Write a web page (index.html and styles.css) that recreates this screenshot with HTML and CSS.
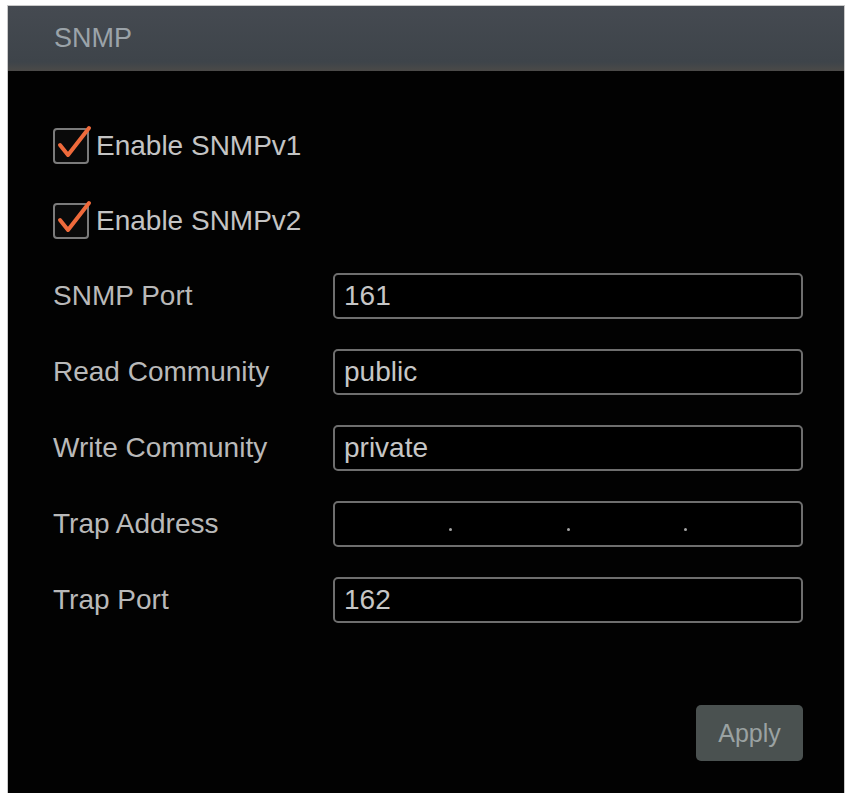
FILE: index.html
```html
<!DOCTYPE html>
<html lang="en">
<head>
  <meta charset="UTF-8">
  <meta name="viewport" content="width=device-width, initial-scale=1.0">
  <title>SNMP</title>
  <link rel="stylesheet" href="styles.css">
</head>
<body>
  <div class="panel">

    <!-- title bar -->
    <header class="panel-header">SNMP</header>

    <div class="panel-body">

      <!-- version switches -->
      <div class="checks">
        <label class="check-row">
          <span class="check-box">
            <svg class="check-mark" viewBox="0 0 40 40" width="40" height="40">
              <path d="M7 21 L15 31 L36 4" />
            </svg>
          </span>
          Enable SNMPv1
        </label>
        <label class="check-row">
          <span class="check-box">
            <svg class="check-mark" viewBox="0 0 40 40" width="40" height="40">
              <path d="M7 21 L15 31 L36 4" />
            </svg>
          </span>
          Enable SNMPv2
        </label>
      </div>

      <!-- settings -->
      <div class="fields">
        <div class="field-label">SNMP Port</div>
        <div class="field-input">161</div>

        <div class="field-label">Read Community</div>
        <div class="field-input">public</div>

        <div class="field-label">Write Community</div>
        <div class="field-input">private</div>

        <div class="field-label">Trap Address</div>
        <div class="field-input ip">
          <span class="ip-part"></span>
          <span class="ip-dot"></span>
          <span class="ip-part"></span>
          <span class="ip-dot"></span>
          <span class="ip-part"></span>
          <span class="ip-dot"></span>
          <span class="ip-part"></span>
        </div>

        <div class="field-label">Trap Port</div>
        <div class="field-input">162</div>
      </div>

      <div class="actions">
        <button class="apply-button">Apply</button>
      </div>

    </div>
  </div>
</body>
</html>
```

FILE: styles.css
```css
* {
  margin: 0;
  padding: 0;
  box-sizing: border-box;
}

body {
  background: #ffffff;
  font-family: "Liberation Sans", Arial, sans-serif;
}

.panel {
  width: 836px;
  height: 787px;
  margin: 6px 0 0 8px;
  background: #020202;
  box-shadow: 0 0 0 1px #c9c9c9;
  display: flex;
  flex-direction: column;
}

/* Title bar */
.panel-header {
  height: 65px;
  padding-left: 46px;
  display: flex;
  align-items: center;
  font-size: 27px;
  color: #9ba3a9;
  background: linear-gradient(#454a51, #3e444a 86%, #4b4a48);
}

.panel-body {
  flex: 1;
  padding: 56px 41px 0 45px;
  display: flex;
  flex-direction: column;
}

/* Checkboxes */
.checks {
  display: flex;
  flex-direction: column;
  gap: 37px;
  margin-bottom: 33px;
}

.check-row {
  height: 38px;
  display: flex;
  align-items: center;
  gap: 7px;
  font-size: 28px;
  color: #c4c4c4;
}

.check-box {
  position: relative;
  width: 36px;
  height: 36px;
  border: 2px solid #7b7b7b;
  border-radius: 4px;
  background: #0a0a0a;
}

.check-mark {
  position: absolute;
  left: -2px;
  top: -6px;
  fill: none;
  stroke: #ef6a3b;
  stroke-width: 4;
  stroke-linecap: round;
  stroke-linejoin: round;
}

/* Label / input rows */
.fields {
  display: grid;
  grid-template-columns: 280px 470px;
  row-gap: 30px;
}

.field-label {
  height: 46px;
  display: flex;
  align-items: center;
  font-size: 28px;
  color: #b9b9b9;
}

.field-input {
  height: 46px;
  padding-left: 9px;
  display: flex;
  align-items: center;
  font-size: 28px;
  color: #c6c6c6;
  border: 2px solid #6e6e6e;
  border-radius: 5px;
  background: #000000;
}

.ip {
  padding-left: 0;
}

.ip-part {
  flex: 1;
}

/* small separator points between the address octets */
.ip-dot {
  width: 3px;
  height: 3px;
  margin-top: 10px;
  border-radius: 50%;
  background: #a5a5a5;
}

/* Footer */
.actions {
  margin-top: 82px;
  display: flex;
  justify-content: flex-end;
}

.apply-button {
  width: 107px;
  height: 56px;
  font-family: "Liberation Sans", Arial, sans-serif;
  font-size: 25px;
  color: #9aa2a2;
  background: #4a5150;
  border: none;
  border-radius: 5px;
}
```
